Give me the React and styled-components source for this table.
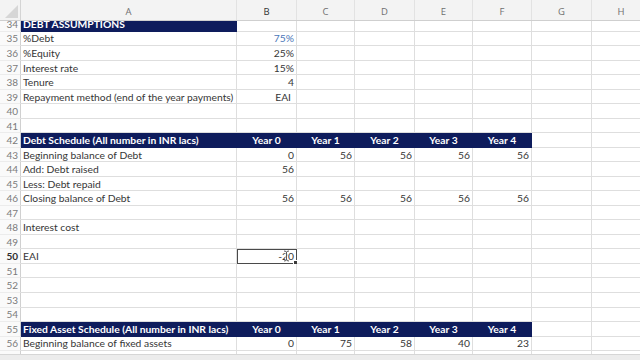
import React from 'react';
import styled, { createGlobalStyle, css } from 'styled-components';

const GlobalStyle = createGlobalStyle`
    html, body {
        margin: 0;
        padding: 0;
        background: #ffffff;
        overflow: hidden;
    }
    body {
        width: 640px;
        height: 360px;
        font-family: Lato, "Open Sans", sans-serif;
    }
`;

const COLS = '21px 216px 60px 58px 60px 58px 59px 60px 59px';
const ROW_H = '14.52px';
const NAVY = '#0e1c5c';
const GRID = '#dedede';

const Sheet = styled.div`
    display: flex;
    flex-direction: column;
    width: 640px;
    height: 360px;
    overflow: hidden;
`;

const HeaderRow = styled.div`
    display: grid;
    grid-template-columns: ${COLS};
    height: 21px;
    flex-shrink: 0;
    background: #f3f3f3;
    border-bottom: 1px solid #cfcfcf;
    box-sizing: border-box;
`;

const Corner = styled.div`
    display: flex;
    align-items: flex-end;
    justify-content: flex-end;
    padding: 0 2px 2px 0;
    border-right: 1px solid #d4d4d4;
`;

const ColLetter = styled.div`
    display: flex;
    align-items: center;
    justify-content: center;
    font-family: "Open Sans", sans-serif;
    font-size: 9.5px;
    color: ${(p) => (p.$active ? '#333' : '#6f6f6f')};
    border-right: 1px solid #e2e2e2;
    padding-top: 2px;
`;

const Body = styled.div`
    flex: 1;
    overflow: hidden;
`;

const Scroller = styled.div`
    display: flex;
    flex-direction: column;
    margin-top: -3.8px;
`;

const Row = styled.div`
    display: grid;
    grid-template-columns: ${COLS};
    height: ${ROW_H};
`;

const RowNum = styled.div`
    display: flex;
    align-items: center;
    justify-content: flex-end;
    padding-right: 2px;
    font-size: 10px;
    color: ${(p) => (p.$active ? '#2e2e2e' : '#7a7a7a')};
    font-weight: ${(p) => (p.$active ? 700 : 400)};
    background: #fafafa;
    border-right: 1px solid #d0d0d0;
    border-bottom: 1px solid #ececec;
`;

const Cell = styled.div`
    position: relative;
    display: flex;
    align-items: center;
    justify-content: ${(p) =>
        p.$align === 'right' ? 'flex-end' : p.$align === 'center' ? 'center' : 'flex-start'};
    padding: 0 ${(p) => p.$padRight || 2}px 0 2px;
    font-size: 10.3px;
    white-space: nowrap;
    overflow: visible;
    color: ${(p) => p.$color || '#363636'};
    border-right: 1px solid ${GRID};
    border-bottom: 1px solid ${GRID};
    box-sizing: border-box;
    min-width: 0;
    ${(p) =>
        p.$band &&
        css`
            background: ${NAVY};
            color: #ffffff;
            font-weight: 700;
            border-color: ${NAVY};
        `}
    ${(p) =>
        p.$selected &&
        css`
            outline: 1px solid #4a4a4a;
            outline-offset: -1px;
        `}
`;

const Handle = styled.span`
    position: absolute;
    right: -2px;
    bottom: -2px;
    width: 3px;
    height: 3px;
    background: #3a3a3a;
    border: 1px solid #fff;
`;

const Cursor = styled.svg`
    position: absolute;
    right: 6px;
    top: 1px;
`;

const BottomBar = styled.div`
    height: 5px;
    flex-shrink: 0;
    background: #ececec;
    border-top: 1px solid #d6d6d6;
`;

const letters = ['A', 'B', 'C', 'D', 'E', 'F', 'G', 'H'];

const years = ['Year 0', 'Year 1', 'Year 2', 'Year 3', 'Year 4'];

const rows = [
    { n: 34, label: 'DEBT ASSUMPTIONS', labelBand: true },
    { n: 35, label: '%Debt', vals: ['75%'], blue: true },
    { n: 36, label: '%Equity', vals: ['25%'] },
    { n: 37, label: 'Interest rate', vals: ['15%'] },
    { n: 38, label: 'Tenure', vals: ['4'] },
    { n: 39, label: 'Repayment method (end of the year payments)', vals: ['EAI'], pad: 5 },
    { n: 40 },
    { n: 41 },
    { n: 42, label: 'Debt Schedule (All number in INR lacs)', header: true },
    { n: 43, label: 'Beginning balance of Debt', vals: ['0', '56', '56', '56', '56'] },
    { n: 44, label: 'Add: Debt raised', vals: ['56'] },
    { n: 45, label: 'Less: Debt repaid' },
    { n: 46, label: 'Closing balance of Debt', vals: ['56', '56', '56', '56', '56'] },
    { n: 47 },
    { n: 48, label: 'Interest cost' },
    { n: 49 },
    { n: 50, label: 'EAI', vals: ['-20'], selected: true },
    { n: 51 },
    { n: 52 },
    { n: 53 },
    { n: 54 },
    { n: 55, label: 'Fixed Asset Schedule (All number in INR lacs)', header: true },
    { n: 56, label: 'Beginning balance of fixed assets', vals: ['0', '75', '58', '40', '23'] },
    { n: 57, label: 'Add: Net Purchases', vals: ['75'] },
    { n: 58 },
];

function SheetRow({ r }) {
    const cells = [];
    cells.push(
        <Cell key="a" $band={r.header || r.labelBand}>
            {r.label}
        </Cell>
    );
    for (let i = 0; i < 7; i++) {
        if (r.header && i < 5) {
            cells.push(
                <Cell key={i} $band $align="center">
                    {years[i]}
                </Cell>
            );
            continue;
        }
        const v = r.vals && r.vals[i];
        const sel = r.selected && i === 0;
        cells.push(
            <Cell
                key={i}
                $align="right"
                $padRight={r.pad}
                $color={r.blue && i === 0 ? '#4a76b8' : undefined}
                $selected={sel}>
                {v}
                {sel && (
                    <>
                        <Cursor width="7" height="12" viewBox="0 0 7 12">
                            <path
                                d="M1 1 Q3.5 1 3.5 2.5 Q3.5 1 6 1 M3.5 2.5 V9.5 M1 11 Q3.5 11 3.5 9.5 Q3.5 11 6 11"
                                fill="none"
                                stroke="#ffffff"
                                strokeWidth="2"
                            />
                            <path
                                d="M1 1 Q3.5 1 3.5 2.5 Q3.5 1 6 1 M3.5 2.5 V9.5 M1 11 Q3.5 11 3.5 9.5 Q3.5 11 6 11"
                                fill="none"
                                stroke="#333"
                                strokeWidth="0.8"
                            />
                        </Cursor>
                        <Handle />
                    </>
                )}
            </Cell>
        );
    }
    return (
        <Row>
            <RowNum $active={r.selected}>{r.n}</RowNum>
            {cells}
        </Row>
    );
}

export default function App() {
    return (
        <>
            <GlobalStyle />
            <Sheet>
                <HeaderRow>
                    <Corner>
                        <svg width="13" height="13" viewBox="0 0 13 13">
                            <polygon points="13,0 13,13 0,13" fill="#d6d6d6" />
                        </svg>
                    </Corner>
                    {letters.map((l) => (
                        <ColLetter key={l} $active={l === 'B'}>
                            {l}
                        </ColLetter>
                    ))}
                </HeaderRow>
                <Body>
                    <Scroller>
                        {rows.map((r) => (
                            <SheetRow key={r.n} r={r} />
                        ))}
                    </Scroller>
                </Body>
                <BottomBar />
            </Sheet>
        </>
    );
}
